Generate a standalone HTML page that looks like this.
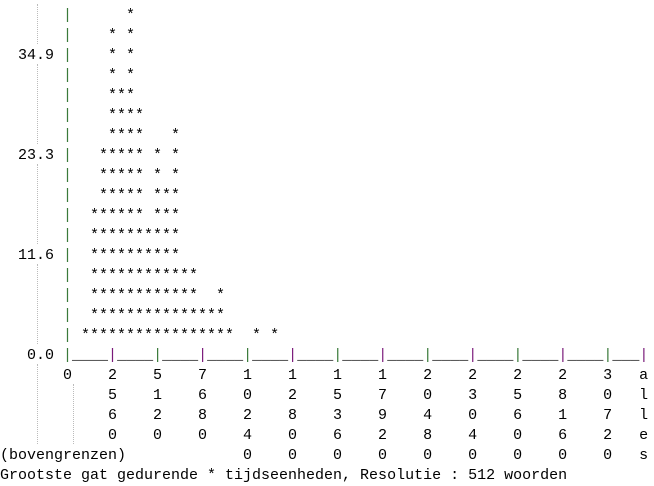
<!DOCTYPE html>
<html><head><meta charset="utf-8"><style>
html,body{margin:0;padding:0;background:#fff;width:654px;height:486px;overflow:hidden;position:relative}
pre{position:absolute;left:0;top:6px;margin:0;font-family:"Liberation Mono","Courier New",monospace;font-size:15px;line-height:20px;color:#000}
.g{color:#3a7a3a}.p{color:#7a1a7a}
.d{position:absolute;width:0;border-left:1px dotted #bbb}
</style></head><body>
<div class="d" style="left:37px;top:4px;height:40px"></div>
<div class="d" style="left:37px;top:64px;height:80px"></div>
<div class="d" style="left:37px;top:164px;height:80px"></div>
<div class="d" style="left:37px;top:264px;height:80px"></div>
<div class="d" style="left:37px;top:364px;height:80px"></div>
<div class="d" style="left:73px;top:384px;height:60px"></div>
<pre>       <span class="g">|</span>      *
       <span class="g">|</span>    * *
  34.9 <span class="g">|</span>    * *
       <span class="g">|</span>    * *
       <span class="g">|</span>    ***
       <span class="g">|</span>    ****
       <span class="g">|</span>    ****   *
  23.3 <span class="g">|</span>   ***** * *
       <span class="g">|</span>   ***** * *
       <span class="g">|</span>   ***** ***
       <span class="g">|</span>  ****** ***
       <span class="g">|</span>  **********
  11.6 <span class="g">|</span>  **********
       <span class="g">|</span>  ************
       <span class="g">|</span>  ************  *
       <span class="g">|</span>  ***************
       <span class="g">|</span> *****************  * *
   0.0 <span class="g">|</span>____<span class="p">|</span>____<span class="g">|</span>____<span class="p">|</span>____<span class="g">|</span>____<span class="p">|</span>____<span class="g">|</span>____<span class="p">|</span>____<span class="g">|</span>____<span class="p">|</span>____<span class="g">|</span>____<span class="p">|</span>____<span class="g">|</span>___<span class="p">|</span>
       0    2    5    7    1    1    1    1    2    2    2    2    3   a
            5    1    6    0    2    5    7    0    3    5    8    0   l
            6    2    8    2    8    3    9    4    0    6    1    7   l
            0    0    0    4    0    6    2    8    4    0    6    2   e
(bovengrenzen)             0    0    0    0    0    0    0    0    0   s
Grootste gat gedurende * tijdseenheden, Resolutie : 512 woorden</pre>
</body></html>
